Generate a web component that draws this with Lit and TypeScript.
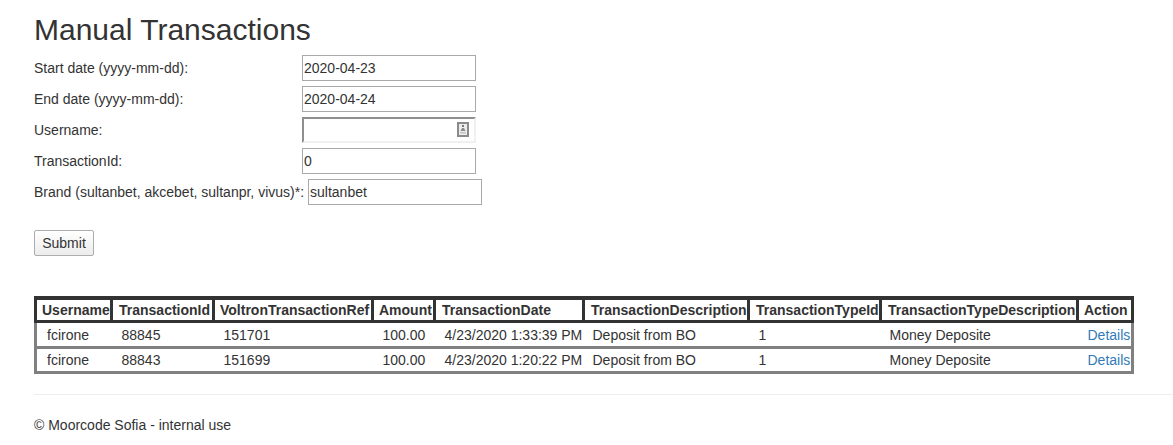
import { LitElement, html, css } from "lit";
import { customElement } from "lit/decorators.js";

const HEADERS: [string, number][] = [
  ["Username", 76], ["TransactionId", 102], ["VoltronTransactionRef", 159], ["Amount", 62],
  ["TransactionDate", 149], ["TransactionDescription", 165], ["TransactionTypeId", 132],
  ["TransactionTypeDescription", 197], ["Action", 55],
];
const ROWS = [
  ["fcirone", "88845", "151701", "100.00", "4/23/2020 1:33:39 PM", "Deposit from BO", "1", "Money Deposite"],
  ["fcirone", "88843", "151699", "100.00", "4/23/2020 1:20:22 PM", "Deposit from BO", "1", "Money Deposite"],
];

@customElement("app-root")
export class AppRoot extends LitElement {
  static styles = css`
    :host { display: block; font: 14px/20px "Liberation Sans", Arial, sans-serif; color: #333; background: #fff; }
    .page { padding: 0 0 0 34px; height: 445px; box-sizing: border-box; overflow: hidden; }
    h2 { font-size: 30px; font-weight: 500; line-height: 33px; margin: 13px 0 9px; }
    .form { display: flex; flex-direction: column; gap: 5px; }
    .row { display: flex; align-items: center; height: 26px; }
    .label { min-width: 264px; margin-right: 4px; }
    .field { position: relative; display: flex; }
    input { box-sizing: border-box; width: 174px; height: 26px; font: inherit; color: #333; padding: 1px; margin: 0; border: 1px solid #a9a9a9; background: #fff; outline: none; }
    input.inset { border: 2px solid; border-color: #8f8f8f #f0f0f0 #f0f0f0 #8f8f8f; padding: 1px; }
    .card { position: absolute; right: 7px; top: 5px; width: 12px; height: 15px; }
    button { display: block; margin: 25px 0 0; box-sizing: border-box; width: 60px; height: 26px; font: inherit; color: #333; padding: 0; border: 1px solid #adadad; border-radius: 2px; background: linear-gradient(#fff, #ececec); }
    table { border-collapse: collapse; table-layout: fixed; width: 1100px; margin-top: 40px; }
    th { border: 3px solid #333; box-shadow: inset 0 1px 0 #333; font-weight: 700; text-align: left; padding: 1px 0 0 5px; line-height: 20px; white-space: nowrap; overflow: hidden; }
    th:nth-child(2), th:nth-child(5), th:nth-child(6), th:nth-child(7), th:nth-child(8) { padding-left: 6px; }
    td { border-top: 3px solid #808080; border-bottom: 3px solid #808080; padding: 1px 0 1px 10px; line-height: 20px; white-space: nowrap; }
    td:nth-child(6), td:nth-child(8) { padding-left: 9px; }
    td:first-child { border-left: 3px solid #808080; }
    td:last-child { border-right: 3px solid #808080; }
    tbody tr:first-child td { padding-top: 2px; }
    a { color: #337ab7; text-decoration: none; }
    hr { border: 0; border-top: 1px solid #eee; margin: 20px 0 20px; }
    .foot { line-height: 20px; }
  `;

  render() {
    return html`<div class="page">
      <h2>Manual Transactions</h2>
      <div class="form">
        <div class="row"><span class="label">Start date (yyyy-mm-dd):</span><input value="2020-04-23" /></div>
        <div class="row"><span class="label">End date (yyyy-mm-dd):</span><input value="2020-04-24" /></div>
        <div class="row"><span class="label">Username:</span>
          <span class="field"><input class="inset" />
            <svg class="card" viewBox="0 0 12 15"><rect x="1" y="1" width="10" height="13" fill="#ececec" stroke="#8a8a8a" stroke-width="2"/><rect x="5" y="3" width="2" height="2" fill="#777"/><path d="M3.5 9l1.5-3h2l1.5 3z" fill="#8a8a8a"/><rect x="3" y="10" width="6" height="1.5" fill="#c4c4c4"/></svg>
          </span></div>
        <div class="row"><span class="label">TransactionId:</span><input value="0" /></div>
        <div class="row"><span class="label">Brand (sultanbet, akcebet, sultanpr, vivus)*:</span><input value="sultanbet" /></div>
      </div>
      <button>Submit</button>
      <table>
        <colgroup>${HEADERS.map(([, w]) => html`<col style="width:${w}px" />`)}</colgroup>
        <thead><tr>${HEADERS.map(([h]) => html`<th>${h}</th>`)}</tr></thead>
        <tbody>${ROWS.map((r) => html`<tr>${r.map((c) => html`<td>${c}</td>`)}<td><a href="#">Details</a></td></tr>`)}</tbody>
      </table>
      <hr />
      <div class="foot">© Moorcode Sofia - internal use</div>
    </div>`;
  }
}
